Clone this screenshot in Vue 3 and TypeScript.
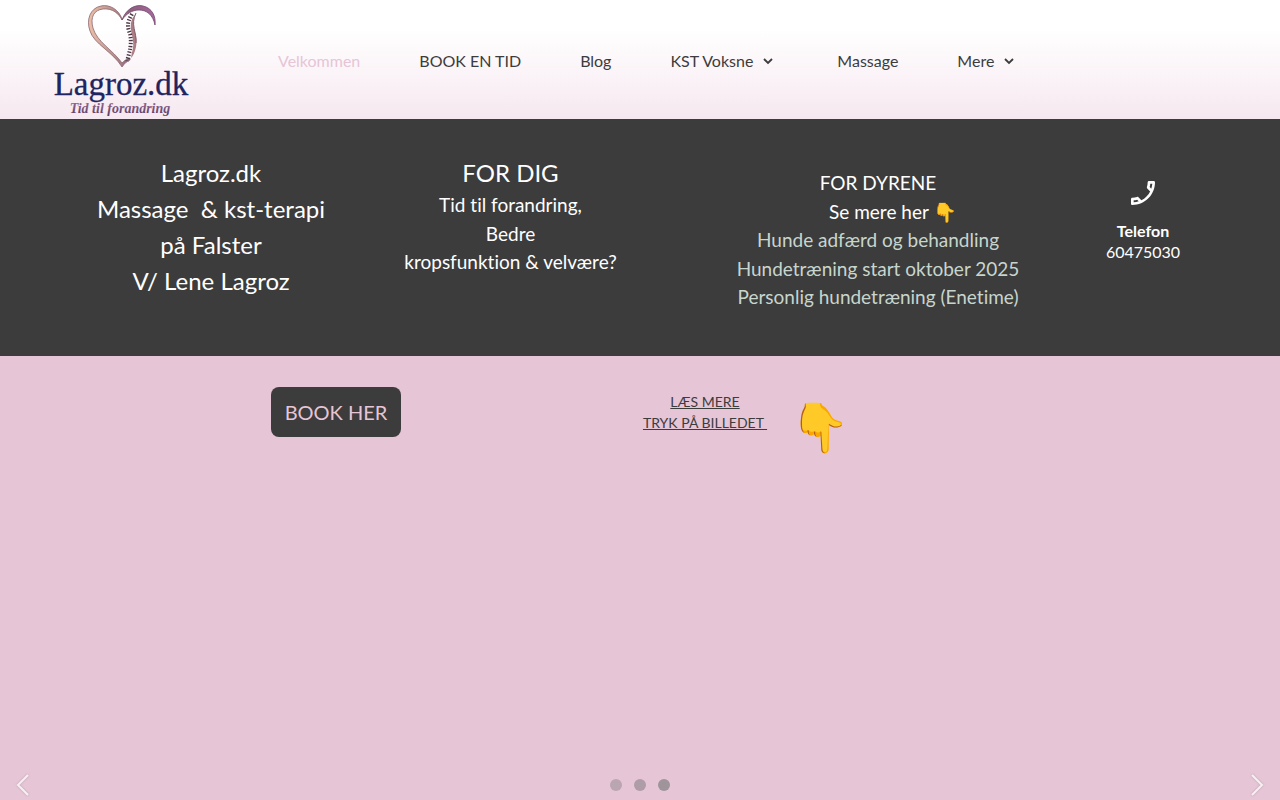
<script setup lang="ts">
interface NavItem {
  label: string
  active?: boolean
  menu?: boolean
}

const navItems: NavItem[] = [
  { label: 'Velkommen', active: true },
  { label: 'BOOK EN TID' },
  { label: 'Blog' },
  { label: 'KST Voksne', menu: true },
  { label: 'Massage' },
  { label: 'Mere', menu: true },
]

const animalLinks: string[] = [
  'Hunde adfærd og behandling',
  'Hundetræning start oktober 2025',
  'Personlig hundetræning (Enetime)',
]

const slides: string[] = ['first', 'second', 'third']
</script>

<template>
  <div class="page">
    <header class="header">
      <a class="logo" href="#" aria-label="Lagroz.dk">
        <svg viewBox="0 0 136 119" width="136" height="119">
          <defs>
            <linearGradient id="heart" gradientUnits="userSpaceOnUse" x1="36" y1="20" x2="104" y2="20">
              <stop offset="0" stop-color="#edbfa9" />
              <stop offset="0.4" stop-color="#b48a88" />
              <stop offset="0.6" stop-color="#8c5f7c" />
              <stop offset="1" stop-color="#a8679f" />
            </linearGradient>
            <linearGradient id="tag" x1="0" y1="0" x2="0" y2="1">
              <stop offset="0" stop-color="#9a6d98" />
              <stop offset="1" stop-color="#57395f" />
            </linearGradient>
          </defs>
          <path
            d="M69 19C66 10 57 4 48 6C37 8 33 20 37 31C41 44 60 52 69 67C72 63 74 61 77 60L77 58C73 59 71 61 69 63C60 50 44 42 40 28C37 17 41 10 50 9C60 8 66 14 69 20Z"
            fill="url(#heart)" stroke="#8a6871" stroke-width="0.8"
          />
          <path
            d="M69 20C73 9 82 4 90 6C99 8 103 16 102 25C100 15 94 10 86 10C79 10 73 14 69 20Z"
            fill="url(#heart)" stroke="#74466f" stroke-width="0.8"
          />
          <path d="M83 13C76 26 86 34 83 47C82 52 80 56 78 58C79 51 81 47 80 41C79 32 76 28 79 19Z" fill="#ad7d86" />
          <path d="M79 14C73 24 75 28 77 34C79 43 77 51 74 61" fill="none" stroke="#4b3443" stroke-width="4" stroke-dasharray="1.300 1.700" />
          <path d="M83 13C77 25 84 32 83 43" fill="none" stroke="#7f5d6b" stroke-width="1" />
          <text class="logo-name" x="68" y="95" text-anchor="middle">Lagroz.dk</text>
          <text class="logo-tag" x="67" y="113" text-anchor="middle" fill="url(#tag)">Tid til forandring</text>
        </svg>
      </a>
      <nav class="nav">
        <a v-for="item in navItems" :key="item.label" href="#" class="nav-link" :class="{ active: item.active }">
          {{ item.label }}
          <svg v-if="item.menu" class="chevron" viewBox="0 0 20 20" width="20" height="20">
            <path d="M6 8L10 12L14 8" fill="none" stroke="currentColor" stroke-width="1.8" />
          </svg>
        </a>
      </nav>
    </header>

    <section class="info">
      <h1 class="large">Lagroz.dk<br />Massage&nbsp; &amp; kst-terapi<br />på Falster<br />V/ Lene Lagroz</h1>
      <div class="copy">
        <h2 class="large">FOR DIG</h2>
        <p>Tid til forandring,<br />Bedre<br />kropsfunktion &amp; velvære?</p>
      </div>
      <div class="copy animals">
        <p>FOR DYRENE</p>
        <p class="see-more">Se mere her 👇</p>
        <a v-for="link in animalLinks" :key="link" href="#">{{ link }}</a>
      </div>
      <div class="phone">
        <svg viewBox="3 3 18 18" width="24" height="24">
          <path
            transform="matrix(-1 0 0 1 24 0)"
            fill="#fff"
            d="M6.540 5c.06.89.21 1.760.45 2.590l-1.200 1.200c-.41-1.200-.67-2.470-.76-3.790h1.510m9.860 12.020c.85.24 1.720.39 2.600.45v1.490c-1.320-.09-2.590-.35-3.800-.75l1.200-1.190M7.500 3H4c-.55 0-1 .45-1 1 0 9.390 7.610 17 17 17 .55 0 1-.45 1-1v-3.490c0-.55-.45-1-1-1-1.240 0-2.450-.2-3.570-.57-.1-.04-.21-.05-.31-.05-.26 0-.51.1-.71.29l-2.200 2.200c-2.830-1.450-5.150-3.760-6.590-6.590l2.200-2.200c.28-.28.36-.67.25-1.020C8.700 6.450 8.500 5.250 8.500 4c0-.55-.45-1-1-1z"
          />
        </svg>
        <strong>Telefon</strong>
        <a href="tel:60475030">60475030</a>
      </div>
    </section>

    <main class="hero">
      <div class="actions">
        <button type="button" class="book">BOOK HER</button>
        <a href="#" class="read">LÆS MERE<br />TRYK PÅ BILLEDET&nbsp;</a>
        <span class="hand">👇</span>
      </div>
      <div class="slider">
        <button type="button" class="arrow" aria-label="Previous slide">
          <svg viewBox="0 0 14 24" width="14" height="24"><path d="M12 2L2 12L12 22" /></svg>
        </button>
        <div class="dots">
          <button v-for="slide in slides" :key="slide" type="button" class="dot" :class="slide" :aria-label="slide + ' slide'"></button>
        </div>
        <button type="button" class="arrow" aria-label="Next slide">
          <svg viewBox="0 0 14 24" width="14" height="24"><path d="M2 2L12 12L2 22" /></svg>
        </button>
      </div>
    </main>
  </div>
</template>

<style>
body {
  margin: 0;
}
</style>

<style scoped>
.page {
  display: flex;
  flex-direction: column;
  min-height: 100vh;
  font-family: Lato, "Noto Color Emoji", sans-serif;
  font-variant-ligatures: none;
  color: #3c3c3c;
}
a {
  color: inherit;
  text-decoration: none;
}
h1, h2, p {
  margin: 0;
  font-weight: 400;
}
button {
  border: 0;
  padding: 0;
  font-family: inherit;
  cursor: pointer;
}
svg {
  display: block;
}
.header {
  display: flex;
  align-items: center;
  padding: 0 53px;
  background: linear-gradient(#fff 25%, #f6e8f0);
}
.logo-name {
  font: 33px "Liberation Serif", serif;
  fill: #202460;
  stroke: #202460;
  stroke-width: 0.3;
}
.logo-tag {
  font: italic bold 14px "Liberation Serif", serif;
}
.nav {
  display: flex;
  flex-wrap: wrap;
  gap: 0 59px;
  margin-left: 89px;
  padding-top: 2px;
}
.nav-link {
  display: flex;
  align-items: center;
  gap: 5px;
  font-size: 16px;
  line-height: 24px;
}
.active {
  color: #e6c5d6;
}
.info {
  display: grid;
  grid-template-columns: 300fr 299fr 436fr 94fr;
  padding: 36px 90px 44px 61px;
  background: #3c3c3c;
  color: #fff;
  text-align: center;
}
.large {
  font-size: 24px;
  line-height: 36px;
}
.copy {
  font-size: 19px;
  line-height: 1.5;
}
.animals {
  display: flex;
  flex-direction: column;
  padding-top: 14px;
}
.animals a {
  color: #c8d5cd;
}
.see-more {
  padding-left: 30px;
}
.phone {
  display: flex;
  flex-direction: column;
  align-items: center;
  padding-top: 26px;
  font-size: 16px;
  line-height: 21px;
}
.phone strong {
  margin-top: 15px;
}
.hero {
  display: flex;
  flex: 1;
  flex-direction: column;
  justify-content: space-between;
  background: #e6c5d6;
}
.actions {
  display: grid;
  grid-template-columns: 568fr 170fr 438fr;
  align-items: start;
  padding: 31px 52px 0;
}
.book {
  justify-self: center;
  padding: 0 14px;
  border-radius: 8px;
  background: #3c3c3c;
  color: #e6c5d6;
  font-size: 20px;
  line-height: 50px;
}
.read {
  padding-top: 4px;
  font-size: 14px;
  line-height: 21px;
  text-align: center;
  text-decoration: underline;
}
.hand {
  padding-top: 3px;
  font-size: 48px;
  line-height: 72px;
}
.slider {
  display: flex;
  align-items: center;
  justify-content: space-between;
  padding: 0 16px 3px;
}
.arrow {
  background: none;
}
.arrow path {
  fill: none;
  stroke: #f8eef3;
  stroke-width: 2;
}
.arrow svg {
  filter: drop-shadow(0 0 1px #8888);
}
.dots {
  display: flex;
  gap: 12px;
}
.dot {
  width: 12px;
  height: 12px;
  border-radius: 50%;
  background: #b9a6b0;
}
.second {
  background: #ae9da7;
}
.third {
  background: #a0949b;
}
</style>
